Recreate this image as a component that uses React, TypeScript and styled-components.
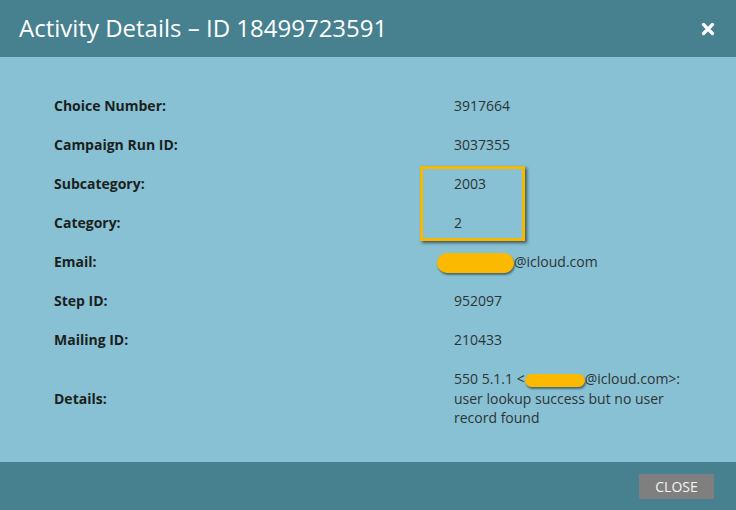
import React from "react";
import styled, { createGlobalStyle } from "styled-components";

const Global = createGlobalStyle`
  html, body { margin: 0; padding: 0; }
  body {
    width: 736px;
    height: 510px;
    overflow: hidden;
    font-family: "Open Sans", "Noto Sans", sans-serif;
    background: #87c1d3;
  }
`;

const Dialog = styled.div`
  width: 736px;
  height: 510px;
  display: flex;
  flex-direction: column;
  background: #87c1d3;
`;

const Header = styled.div`
  height: 57px;
  flex: 0 0 57px;
  background: #47808f;
  display: flex;
  align-items: center;
  justify-content: space-between;
  padding: 0 20px 0 19px;
  box-sizing: border-box;
`;

const Title = styled.h1`
  margin: 0;
  font-family: "Open Sans", sans-serif;
  font-weight: 400;
  font-size: 24px;
  letter-spacing: 0;
  color: #ffffff;
  line-height: 1;
  padding-bottom: 1px;
`;

const CloseX = styled.button`
  border: 0;
  background: none;
  padding: 0;
  width: 16px;
  height: 16px;
  display: flex;
  align-items: center;
  justify-content: center;
  cursor: pointer;
  margin-top: 1px;
`;

const Body = styled.div`
  position: relative;
  flex: 1;
  padding: 29px 0 0 54px;
  box-sizing: border-box;
`;

const Rows = styled.div`
  display: grid;
  grid-template-columns: 400px 248px;
  grid-auto-rows: minmax(39px, auto);
`;

const Label = styled.div`
  font-size: 14px;
  font-weight: 700;
  color: #1c1f21;
  padding: 10px 0;
  line-height: 19px;
  display: flex;
  align-items: center;
  box-sizing: border-box;
`;

const Value = styled.div`
  font-size: 14px;
  font-weight: 400;
  color: #2e3436;
  padding: 10px 0;
  line-height: 19px;
  height: auto;
  display: flex;
  align-items: center;
  box-sizing: border-box;
`;

const Wrap = styled.span`
  display: block;
  line-height: 19.5px;
`;

const Redact = styled.span<{ $w: number; $h: number; $shift?: number }>`
  display: inline-block;
  width: ${(p) => p.$w}px;
  height: ${(p) => p.$h}px;
  margin: -4px 0 -4px ${(p) => p.$shift ?? 0}px;
  background: #fbb900;
  border-radius: ${(p) => p.$h / 2}px;
  box-shadow: 1px 2px 2px rgba(0, 0, 0, 0.45);
  vertical-align: middle;
`;

const Highlight = styled.div`
  position: absolute;
  left: 420px;
  top: 109px;
  width: 99px;
  height: 69px;
  border: 3px solid #f7b900;
  box-shadow: 2px 2px 3px rgba(0, 0, 0, 0.55);
  pointer-events: none;
`;

const Footer = styled.div`
  height: 48px;
  flex: 0 0 48px;
  background: #47808f;
  display: flex;
  justify-content: flex-end;
  align-items: flex-start;
  padding: 12px 22px 0 0;
  box-sizing: border-box;
`;

const Button = styled.button`
  width: 75px;
  height: 25px;
  border: 0;
  background: #7f7f7f;
  color: #f4f4f4;
  font-family: "Open Sans", sans-serif;
  font-size: 14px;
  text-transform: uppercase;
  padding: 0;
  cursor: pointer;
`;

const rows: { label: string; value: React.ReactNode }[] = [
  { label: "Choice Number:", value: "3917664" },
  { label: "Campaign Run ID:", value: "3037355" },
  { label: "Subcategory:", value: "2003" },
  { label: "Category:", value: "2" },
  {
    label: "Email:",
    value: (
      <span>
        <Redact $w={77} $h={20} $shift={-17} />
        @icloud.com
      </span>
    ),
  },
  { label: "Step ID:", value: "952097" },
  { label: "Mailing ID:", value: "210433" },
  {
    label: "Details:",
    value: (
      <Wrap>
        550 5.1.1 &lt;
        <Redact $w={60} $h={13} $shift={0} />
        @icloud.com&gt;: user lookup success but no user record found
      </Wrap>
    ),
  },
];

export default function App() {
  return (
    <>
      <Global />
      <Dialog>
        <Header>
          <Title>Activity Details – ID 18499723591</Title>
          <CloseX aria-label="close">
            <svg width="14" height="14" viewBox="0 0 14 14">
              <path
                d="M2.5 2.5 L11.5 11.5 M11.5 2.5 L2.5 11.5"
                stroke="#ffffff"
                strokeWidth="3.2"
                strokeLinecap="round"
              />
            </svg>
          </CloseX>
        </Header>
        <Body>
          <Rows>
            {rows.map((r) => (
              <React.Fragment key={r.label}>
                <Label>{r.label}</Label>
                <Value>{r.value}</Value>
              </React.Fragment>
            ))}
          </Rows>
          <Highlight />
        </Body>
        <Footer>
          <Button>Close</Button>
        </Footer>
      </Dialog>
    </>
  );
}
